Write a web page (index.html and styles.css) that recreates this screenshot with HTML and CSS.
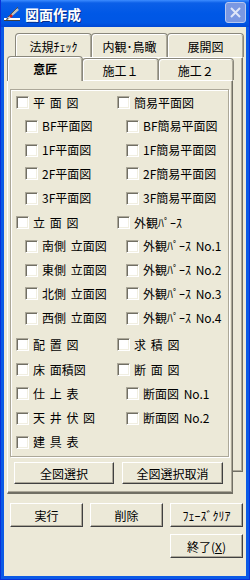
FILE: index.html
```html
<!DOCTYPE html>
<html lang="ja">
<head>
    <meta charset="UTF-8">
    <title>図面作成</title>
    <link rel="stylesheet" href="styles.css">
</head>
<body>
<div class="window">
    <div class="titlebar">
        <svg class="app-icon" width="16" height="16" viewBox="0 0 16 16">
            <rect x="0" y="12" width="16" height="2" fill="#ffffff"/>
            <rect x="0" y="14" width="16" height="1" fill="#404040"/>
            <polygon points="3,12 13,2 15,4 5,13" fill="#c0c0c0"/>
            <polygon points="3,12 5,13 2,14" fill="#202020"/>
            <polygon points="5,10 7,8 9,10 7,12" fill="#d02020"/>
            <line x1="4" y1="11" x2="14" y2="1" stroke="#505050" stroke-width="1"/>
        </svg>
        <span class="title">図面作成</span>
        <span class="close">
            <svg width="11" height="11" viewBox="0 0 11 11">
                <path d="M1 1 L10 10 M10 1 L1 10" stroke="#dfe6f8" stroke-width="2"/>
            </svg>
        </span>
    </div>

    <div class="client">
        <div class="tabstack">
            <div class="tabctl back">
                <div class="tabs">
                    <div class="tab">法規ﾁｪｯｸ</div>
                    <div class="tab">内観･鳥瞰</div>
                    <div class="tab">展開図</div>
                </div>
                <div class="panel"></div>
            </div>

            <div class="tabctl front">
                <div class="tabs">
                    <div class="tab active">意匠</div>
                    <div class="tab">施工１</div>
                    <div class="tab">施工２</div>
                </div>
                <div class="panel">
                    <div class="group">
                        <label class="chk"><span class="box"></span>平 面 図</label>
                        <label class="chk"><span class="box"></span>簡易平面図</label>

                        <label class="chk sub"><span class="box"></span>BF平面図</label>
                        <label class="chk sub"><span class="box"></span>BF簡易平面図</label>

                        <label class="chk sub"><span class="box"></span>1F平面図</label>
                        <label class="chk sub"><span class="box"></span>1F簡易平面図</label>

                        <label class="chk sub"><span class="box"></span>2F平面図</label>
                        <label class="chk sub"><span class="box"></span>2F簡易平面図</label>

                        <label class="chk sub"><span class="box"></span>3F平面図</label>
                        <label class="chk sub"><span class="box"></span>3F簡易平面図</label>

                        <label class="chk"><span class="box"></span>立 面 図</label>
                        <label class="chk"><span class="box"></span>外観ﾊﾟｰｽ</label>

                        <label class="chk sub"><span class="box"></span>南側 立面図</label>
                        <label class="chk sub"><span class="box"></span>外観ﾊﾟｰｽ No.1</label>

                        <label class="chk sub"><span class="box"></span>東側 立面図</label>
                        <label class="chk sub"><span class="box"></span>外観ﾊﾟｰｽ No.2</label>

                        <label class="chk sub"><span class="box"></span>北側 立面図</label>
                        <label class="chk sub"><span class="box"></span>外観ﾊﾟｰｽ No.3</label>

                        <label class="chk sub"><span class="box"></span>西側 立面図</label>
                        <label class="chk sub"><span class="box"></span>外観ﾊﾟｰｽ No.4</label>

                        <label class="chk"><span class="box"></span>配 置 図</label>
                        <label class="chk"><span class="box"></span>求 積 図</label>

                        <label class="chk"><span class="box"></span>床 面積図</label>
                        <label class="chk"><span class="box"></span>断 面 図</label>

                        <label class="chk"><span class="box"></span>仕 上 表</label>
                        <label class="chk sub"><span class="box"></span>断面図 No.1</label>

                        <label class="chk"><span class="box"></span>天 井 伏 図</label>
                        <label class="chk sub"><span class="box"></span>断面図 No.2</label>

                        <label class="chk"><span class="box"></span>建 具 表</label>
                    </div>
                    <div class="panel-buttons">
                        <button class="btn">全図選択</button>
                        <button class="btn">全図選択取消</button>
                    </div>
                </div>
            </div>
        </div>

        <div class="actions">
            <button class="btn">実行</button>
            <button class="btn">削除</button>
            <button class="btn">ﾌｪｰｽﾞｸﾘｱ</button>
            <button class="btn exit">終了(<u>X</u>)</button>
        </div>
    </div>
</div>
</body>
</html>
```

FILE: styles.css
```css
* {
    box-sizing: border-box;
}

body {
    margin: 0;
    font-family: "Noto Sans CJK JP", "Noto Sans", sans-serif;
    font-size: 12px;
    color: #000;
    background: #0b5ae6;
}

.window {
    width: 250px;
    height: 580px;
    display: flex;
    flex-direction: column;
    background: #0b5ae6;
    border-left: 1px solid #0831d9;
    border-right: 1px solid #0831d9;
    border-bottom: 1px solid #0831d9;
}

/* title bar */
.titlebar {
    height: 27px;
    display: flex;
    align-items: center;
    padding: 0 3px 0 3px;
    background: linear-gradient(#3d8cff 0, #0b5fe8 3px, #0058e6 50%, #0056e4 85%, #0048d4 100%);
}

.app-icon {
    flex: none;
    margin-right: 5px;
}

.title {
    color: #fff;
    font-weight: bold;
    font-size: 14px;
    line-height: 1;
    text-shadow: 1px 1px 0 #0a2f8c;
    flex: 1;
}

.close {
    width: 21px;
    height: 21px;
    margin-top: -3px;
    border: 1px solid #b7c8f0;
    border-radius: 3px;
    background: #7b98e2;
    display: flex;
    align-items: center;
    justify-content: center;
}

/* client area */
.client {
    flex: 1;
    margin: 0 3px 3px 3px;
    background: #ece9d8;
    display: flex;
    flex-direction: column;
}

.tabstack {
    display: grid;
    margin-top: 6px;
}

.tabctl {
    grid-area: 1 / 1;
    display: flex;
    flex-direction: column;
}

.tabctl.back {
    margin: 0 3px 22px 11px;
}

.tabctl.front {
    margin: 23px 13px 0 3px;
}

.tabs {
    height: 24px;
    display: flex;
    align-items: flex-end;
}

.tab {
    flex: 1;
    height: 24px;
    display: flex;
    align-items: center;
    justify-content: center;
    background: #ece9d8;
    border: 1px solid #8a887c;
    border-bottom: none;
    border-radius: 4px 4px 0 0;
    box-shadow: inset 1px 1px 0 #fff, inset -1px 0 0 #aca899;
    margin-right: -1px;
    padding-top: 1px;
}

.front .tab {
    height: 22px;
}

.front .tab.active {
    height: 25px;
    margin-bottom: -1px;
    font-weight: bold;
    position: relative;
    z-index: 1;
    padding-bottom: 2px;
}

.panel {
    flex: 1;
    background: #ece9d8;
    border: 1px solid;
    border-color: #fff #716f64 #716f64 #fff;
    box-shadow: inset -1px -1px 0 #aca899;
}

.front .panel {
    padding: 8px 2px 8px 2px;
    border-bottom-width: 2px;
}

/* checkbox group */
.group {
    display: grid;
    grid-template-columns: 101px 1fr;
    grid-template-rows: 23px 24px 24px 23px 26px 23px 24px 24px 23px 26px 27px 23px 25px 24px 24px;
    align-items: center;
    padding: 1px 0 2px 5px;
    border: 1px solid #aca899;
    box-shadow: inset 1px 1px 0 #fff, 1px 1px 0 #fff;
    margin-right: 1px;
}

.chk {
    display: flex;
    align-items: center;
    gap: 4px;
    white-space: nowrap;
    word-spacing: 2px;
    line-height: 14px;
}

.chk.sub {
    padding-left: 9px;
}

.box {
    flex: none;
    width: 13px;
    height: 13px;
    background: #fff;
    border: 1px solid;
    border-color: #aca899 #fff #fff #aca899;
    box-shadow: inset 1px 1px 0 #716f64, inset -1px -1px 0 #f1efe2;
}

/* buttons */
.btn {
    font-family: inherit;
    font-size: 12px;
    color: #000;
    background: #ece9d8;
    border: 1px solid;
    border-color: #fff #404040 #404040 #fff;
    box-shadow: inset -1px -1px 0 #aca899;
    padding: 0;
    margin: 0;
}

.panel-buttons {
    display: grid;
    grid-template-columns: 100px 101px;
    column-gap: 8px;
    margin: 5px 0 0 4px;
}

.panel-buttons .btn {
    height: 22px;
}

.actions {
    display: grid;
    grid-template-columns: repeat(3, 73px);
    grid-auto-rows: 24px;
    column-gap: 7px;
    row-gap: 7px;
    margin: 9px 0 0 6px;
}

.actions .exit {
    grid-column: 3;
}
```
